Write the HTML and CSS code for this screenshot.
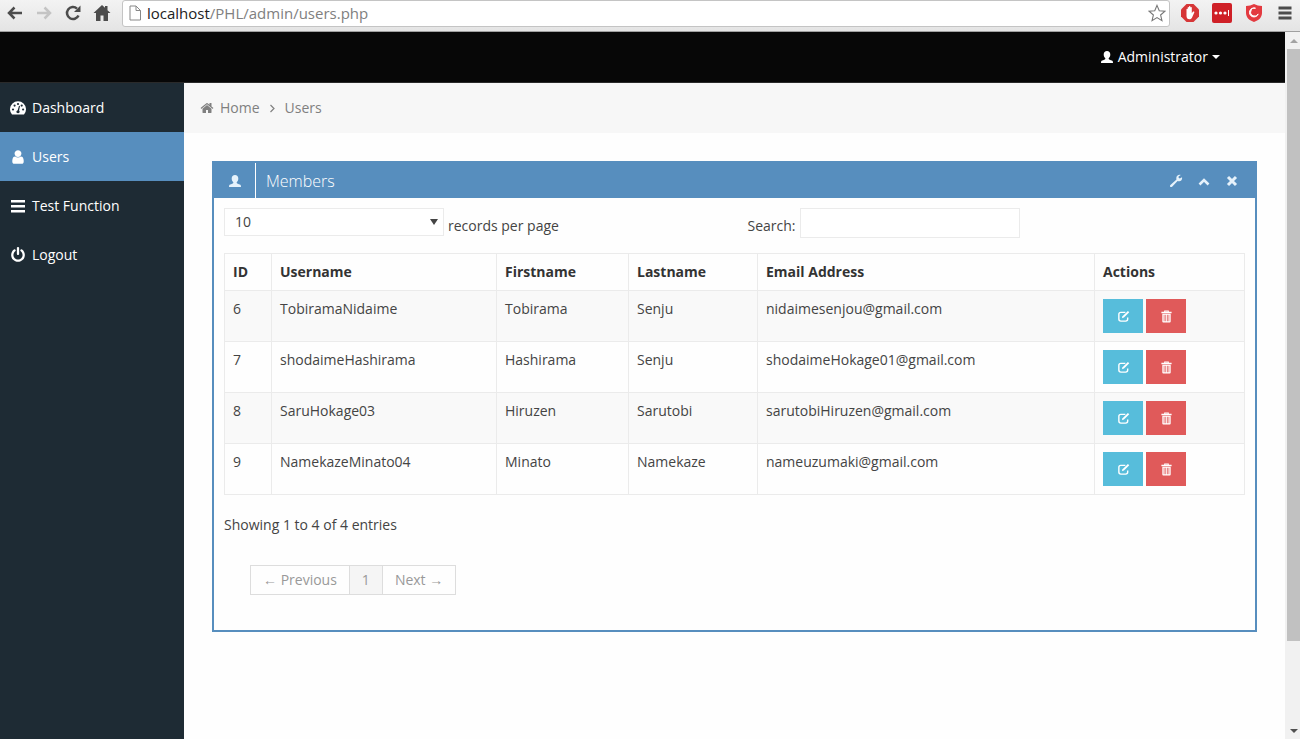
FILE: index.html
```html
<!DOCTYPE html>
<html lang="en">
<head>
  <meta charset="UTF-8">
  <title>Users</title>
  <link rel="stylesheet" href="styles.css">
</head>
<body>
  <!-- Shared icons -->
  <svg class="icon-defs" aria-hidden="true">
    <symbol id="icon-person" viewBox="0 0 14 14">
      <path d="M7 1c2 0 3.300 1.300 3.300 3.500 0 1.600-.7 3-1.600 3.800v.8c.4.7 1.800 1 3.100 1.500.9.400 1.200 1 1.200 2.400H1c0-1.400.3-2 1.200-2.400 1.300-.5 2.700-.8 3.100-1.500v-.8C4.400 7.500 3.700 6.100 3.700 4.500 3.700 2.300 5 1 7 1z"/>
    </symbol>
    <symbol id="icon-edit" viewBox="0 0 14 14">
      <path d="M9 2.500H4.200C2.800 2.500 2 3.300 2 4.700v5.100C2 11.200 2.800 12 4.200 12h5.100c1.400 0 2.200-.8 2.200-2.200V8" fill="none" stroke="currentColor" stroke-width="1.500"/>
      <path d="M11.700 1l1.500 1.500-5.700 5.700-2.300.8.800-2.300z"/>
    </symbol>
    <symbol id="icon-trash" viewBox="0 0 14 14">
      <path d="M4.500 2V.5h5V2h3v1.500h-11V2zm1 0h3v-.5h-3z" fill-rule="evenodd"/>
      <path d="M2.500 4h9v8.500c0 .7-.4 1-1 1h-7c-.6 0-1-.3-1-1zM4 5v7h.8V5zm1.800 0v7h.8V5zm1.700 0v7h.8V5zm1.700 0v7h.8V5z" fill-rule="evenodd"/>
    </symbol>
  </svg>

  <div class="toolbar">
    <button class="tool-btn" aria-label="Back">
      <svg viewBox="0 0 18 18"><path d="M16 9H3M8.500 3.500L3 9l5.500 5.500" fill="none" stroke="currentColor" stroke-width="2.500"/></svg>
    </button>
    <button class="tool-btn" aria-label="Forward" disabled>
      <svg viewBox="0 0 18 18"><path d="M2 9h13M9.500 3.500L15 9l-5.500 5.500" fill="none" stroke="currentColor" stroke-width="2.500"/></svg>
    </button>
    <button class="tool-btn" aria-label="Reload">
      <svg viewBox="0 0 18 18"><path d="M14.500 11.500A6 6 0 1 1 13 4.600" fill="none" stroke="currentColor" stroke-width="2.500"/><path d="M16.500 1.500v6.500H10z"/></svg>
    </button>
    <button class="tool-btn" aria-label="Home page">
      <svg viewBox="0 0 18 18"><path d="M9 1l3 2.800V2h2.500v4.200L17.500 9H15v8h-4.500v-5.500h-3V17H3V9H.5z"/></svg>
    </button>
    <div class="address">
      <svg class="page-icon" viewBox="0 0 14 16"><path d="M2 1h6l4.500 4.500V15H2zM8 1v4.500h4.500" fill="none" stroke="currentColor"/></svg>
      <div class="url" role="textbox" contenteditable="true" spellcheck="false" aria-label="Address">localhost<span class="path">/PHL/admin/users.php</span></div>
      <button class="star" aria-label="Bookmark this page">
        <svg viewBox="0 0 20 20"><path d="M10 1.500l2.500 6 6.300.5-4.800 4.200 1.500 6.300-5.500-3.400-5.500 3.400L6 12.200 1.200 8l6.300-.5z" fill="#fff" stroke="currentColor" stroke-width="1.200"/></svg>
      </button>
    </div>
    <div class="extensions">
      <button class="tool-btn" aria-label="Ad blocker">
        <svg viewBox="0 0 18 18"><path d="M5.500 0h7L18 5.500v7L12.500 18h-7L0 12.500v-7z" fill="#d63637"/><path d="M5.500 10V5.300c0-.8 1.200-.8 1.200 0V3.500c0-.8 1.300-.8 1.300 0v-.8c0-.9 1.400-.9 1.400 0v.8c0-.8 1.400-.8 1.400 0v5.700l1-1.400c.6-.8 1.900-.3 1.500.6l-2.100 4.900c-.7 1.500-1.500 2-2.700 2-2 0-3-1.300-3-3.300z" fill="#fff"/></svg>
      </button>
      <button class="tool-btn large" aria-label="Password manager">
        <svg viewBox="0 0 20 20"><rect width="20" height="20" rx="2" fill="#cf2027"/><g fill="#fff"><circle cx="4" cy="10" r="1.600"/><circle cx="8.500" cy="10" r="1.600"/><circle cx="13" cy="10" r="1.600"/><path d="M16 7h1v6h-1z"/></g></svg>
      </button>
      <button class="tool-btn" aria-label="Security">
        <svg viewBox="0 0 18 18"><path d="M1 2c3 0 5.500-.7 8-2 2.500 1.300 5 2 8 2v7c0 4.500-3.500 7.500-8 9-4.500-1.500-8-4.500-8-9z" fill="#e33a40"/><path d="M10.500 4.200A4.500 4.500 0 1 0 13.200 10 4 4 0 1 1 10.500 4.200z" fill="#fff" stroke="#fff"/></svg>
      </button>
      <button class="tool-btn" aria-label="Menu">
        <svg viewBox="0 0 18 18"><path d="M2.500 2.500h13v3h-13zm0 5h13v3h-13zm0 5h13v3h-13z"/></svg>
      </button>
    </div>
  </div>

  <div class="viewport">
    <div class="site">
      <header class="topbar">
        <button class="user-menu">
          <svg class="icon" viewBox="0 0 14 14"><use href="#icon-person"/></svg>
          Administrator
          <span class="caret"></span>
        </button>
      </header>

      <div class="layout">
        <nav class="sidebar">
          <a href="#dashboard">
            <svg class="menu-icon" viewBox="0 0 16 16"><path d="M2 14.500A8 8 0 1 1 14 14.500z"/><g fill="#1e2b34"><circle cx="3" cy="9.500" r="1.100"/><circle cx="4.600" cy="5.600" r="1.100"/><circle cx="8" cy="4" r="1.100"/><circle cx="11.700" cy="5.600" r="1.100"/><circle cx="13.100" cy="9.500" r="1.100"/><path d="M9 5.800l1 .2-.9 4.500c1.200 1.200.5 2.700-1.100 2.700-1.800 0-2.300-2-.3-2.900z"/></g></svg>
            Dashboard
          </a>
          <a href="#users" class="active">
            <svg class="menu-icon" viewBox="0 0 1792 1792"><path d="M1536 1399q0 109-62.500 187t-150.500 78h-854q-88 0-150.500-78t-62.500-187q0-85 8.500-160.500t31.500-152 58.500-131 94-89 134.500-34.500q131 128 313 128t313-128q76 0 134.500 34.500t94 89 58.500 131 31.500 152 8.500 160.500zm-256-887q0 159-112.500 271.500t-271.500 112.500-271.500-112.500-112.500-271.500 112.500-271.500 271.500-112.500 271.500 112.500 112.500 271.500z"/></svg>
            Users
          </a>
          <a href="#test">
            <svg class="menu-icon" viewBox="0 0 16 16"><path d="M1 2h14v2.500H1zm0 5h14v2.500H1zm0 5h14v2.500H1z"/></svg>
            Test Function
          </a>
          <a href="#logout">
            <svg class="menu-icon" viewBox="0 0 1792 1792"><path d="M1664 896q0 156-61 298t-164 245-245 164-298 61-298-61-245-164-164-245-61-298q0-182 80.500-343t226.500-270q43-32 95.500-25t83.500 50q32 42 24.500 94.500t-49.500 84.500q-98 74-151.500 181t-53.500 228q0 104 40.500 198.500t109.500 163.500 163.500 109.500 198.500 40.500 198.500-40.500 163.500-109.500 109.500-163.500 40.500-198.500q0-121-53.500-228t-151.500-181q-42-32-49.500-84.500t24.500-94.500q31-43 84-50t95 25q146 109 226.500 270t80.500 343zm-640-768v640q0 52-38 90t-90 38-90-38-38-90v-640q0-52 38-90t90-38 90 38 38 90z"/></svg>
            Logout
          </a>
        </nav>

        <main class="content">
          <div class="breadcrumb">
            <svg class="icon" viewBox="0 0 1792 1792"><path d="M1472 992v480q0 26-19 45t-45 19h-384v-384h-256v384h-384q-26 0-45-19t-19-45v-480q0-1 .5-3t.5-3l575-474 575 474q1 2 1 6zm223-69l-62 74q-8 9-21 11h-3q-13 0-21-7l-692-577-692 577q-12 8-24 7-13-2-21-11l-62-74q-8-10-7-23.500t11-21.500l719-599q32-26 76-26t76 26l244 204v-195q0-14 9-23t23-9h192q14 0 23 9t9 23v408l219 182q10 8 11 21.500t-7 23.500z"/></svg>
            <a href="#home">Home</a>
            <svg class="separator" viewBox="0 0 8 14"><path d="M2 4l3.500 3.500L2 11" fill="none" stroke="currentColor" stroke-width="1.200"/></svg>
            <a href="#users">Users</a>
          </div>

          <section class="box">
            <div class="box-header">
              <span class="box-icon"><svg class="icon" viewBox="0 0 14 14"><use href="#icon-person"/></svg></span>
              <h2>Members</h2>
              <div class="box-tools">
                <button aria-label="Settings"><svg class="icon" viewBox="0 0 14 14"><path d="M13 3.200l-2.200 1.200-1.200-.7V2.400L11.700.9C9.500.2 7.200 1.800 7.300 4.300c0 .5.100.8.2 1.200L1.400 11c-1.200 1.300.4 2.900 1.700 1.700l5.500-5.600c2.700.9 5.100-1.300 4.400-3.900z"/></svg></button>
                <button aria-label="Collapse"><svg class="icon" viewBox="0 0 14 14"><path d="M2.500 10.500L7 6l4.500 4.500" fill="none" stroke="currentColor" stroke-width="2.600"/></svg></button>
                <button aria-label="Close"><svg class="icon" viewBox="0 0 14 14"><path d="M3 3l8 8M11 3l-8 8" fill="none" stroke="currentColor" stroke-width="3"/></svg></button>
              </div>
            </div>

            <div class="box-content">
              <div class="filters">
                <div class="length">
                  <span class="select-wrap">
                    <select id="pageLength">
                      <option>10</option>
                      <option>25</option>
                      <option>50</option>
                      <option>100</option>
                    </select>
                  </span>
                  <label for="pageLength">records per page</label>
                </div>
                <div class="search">
                  <label for="userSearch">Search:</label>
                  <input type="text" id="userSearch">
                </div>
              </div>

              <table>
                <colgroup>
                  <col class="col-id">
                  <col class="col-username">
                  <col class="col-firstname">
                  <col class="col-lastname">
                  <col class="col-email">
                  <col class="col-actions">
                </colgroup>
                <thead>
                  <tr>
                    <th>ID</th>
                    <th>Username</th>
                    <th>Firstname</th>
                    <th>Lastname</th>
                    <th>Email Address</th>
                    <th>Actions</th>
                  </tr>
                </thead>
                <tbody>
                  <tr>
                    <td>6</td>
                    <td>TobiramaNidaime</td>
                    <td>Tobirama</td>
                    <td>Senju</td>
                    <td>nidaimesenjou@gmail.com</td>
                    <td>
                      <div class="actions">
                        <button class="btn btn-info" aria-label="Edit"><svg class="icon" viewBox="0 0 14 14"><use href="#icon-edit"/></svg></button>
                        <button class="btn btn-danger" aria-label="Delete"><svg class="icon" viewBox="0 0 14 14"><use href="#icon-trash"/></svg></button>
                      </div>
                    </td>
                  </tr>
                  <tr>
                    <td>7</td>
                    <td>shodaimeHashirama</td>
                    <td>Hashirama</td>
                    <td>Senju</td>
                    <td>shodaimeHokage01@gmail.com</td>
                    <td>
                      <div class="actions">
                        <button class="btn btn-info" aria-label="Edit"><svg class="icon" viewBox="0 0 14 14"><use href="#icon-edit"/></svg></button>
                        <button class="btn btn-danger" aria-label="Delete"><svg class="icon" viewBox="0 0 14 14"><use href="#icon-trash"/></svg></button>
                      </div>
                    </td>
                  </tr>
                  <tr>
                    <td>8</td>
                    <td>SaruHokage03</td>
                    <td>Hiruzen</td>
                    <td>Sarutobi</td>
                    <td>sarutobiHiruzen@gmail.com</td>
                    <td>
                      <div class="actions">
                        <button class="btn btn-info" aria-label="Edit"><svg class="icon" viewBox="0 0 14 14"><use href="#icon-edit"/></svg></button>
                        <button class="btn btn-danger" aria-label="Delete"><svg class="icon" viewBox="0 0 14 14"><use href="#icon-trash"/></svg></button>
                      </div>
                    </td>
                  </tr>
                  <tr>
                    <td>9</td>
                    <td>NamekazeMinato04</td>
                    <td>Minato</td>
                    <td>Namekaze</td>
                    <td>nameuzumaki@gmail.com</td>
                    <td>
                      <div class="actions">
                        <button class="btn btn-info" aria-label="Edit"><svg class="icon" viewBox="0 0 14 14"><use href="#icon-edit"/></svg></button>
                        <button class="btn btn-danger" aria-label="Delete"><svg class="icon" viewBox="0 0 14 14"><use href="#icon-trash"/></svg></button>
                      </div>
                    </td>
                  </tr>
                </tbody>
              </table>

              <p class="info">Showing 1 to 4 of 4 entries</p>
              <div class="pagination">
                <a href="#prev"><span class="arrow-text">←</span> Previous</a>
                <a href="#page1" class="active">1</a>
                <a href="#next">Next <span class="arrow-text">→</span></a>
              </div>
            </div>
          </section>
        </main>
      </div>
    </div>

    <div class="scrollbar" aria-hidden="true">
      <span class="arrow up"></span>
      <div class="track"><div class="thumb"></div></div>
      <span class="arrow down"></span>
    </div>
  </div>
</body>
</html>
```

FILE: styles.css
```css
* {
  box-sizing: border-box;
}
body {
  margin: 0;
  height: 100vh;
  display: flex;
  flex-direction: column;
  font-family: "Open Sans", "Liberation Sans", sans-serif;
  font-size: 14px;
  line-height: 20px;
  color: #444;
  background: #fefefe;
}
button, input, select {
  font: inherit;
  color: inherit;
}
button {
  display: flex;
  align-items: center;
  justify-content: center;
  padding: 0;
  border: 0;
  background: none;
}
a {
  color: inherit;
  text-decoration: none;
}
svg {
  display: block;
  flex: none;
  fill: currentColor;
}
.icon {
  width: 14px;
  height: 14px;
}
.icon-defs {
  display: none;
}

/* browser bar */
.toolbar {
  display: flex;
  align-items: center;
  gap: 11px;
  height: 32px;
  padding: 0 6px 5px;
  background: linear-gradient(#f3f3f3, #e4e4e4);
  border-bottom: 1px solid #a0a0a0;
  color: #4c4c4c;
}
.tool-btn svg {
  width: 18px;
  height: 18px;
}
.tool-btn.large svg {
  width: 20px;
  height: 20px;
}
.tool-btn:disabled {
  color: #c4c4c4;
}
.address {
  flex: 1;
  display: flex;
  align-items: center;
  gap: 5px;
  height: 27px;
  padding: 0 3px 0 5px;
  background: #fff;
  border: 1px solid #c4c4c4;
  border-radius: 3px;
}
.page-icon {
  width: 14px;
  height: 16px;
  color: #888;
}
.url {
  flex: 1;
  font-size: 15px;
  color: #222;
}
.url .path {
  color: #808080;
}
.star {
  color: #777;
}
.star svg {
  width: 18px;
  height: 18px;
}
.extensions {
  display: flex;
  align-items: center;
  gap: 13px;
}

/* page and its scrollbar */
.viewport {
  flex: 1;
  display: flex;
  min-height: 0;
}
.site {
  flex: 1;
  display: flex;
  flex-direction: column;
}
.scrollbar {
  width: 15px;
  display: flex;
  flex-direction: column;
  padding-left: 2px;
  background: #f1f1f1;
}
.track {
  flex: 1;
}
.thumb {
  height: 88%;
  background: #c1c1c1;
}
.arrow {
  height: 17px;
  display: flex;
  align-items: center;
  justify-content: center;
}
.arrow::after {
  content: "";
  border: 4px solid transparent;
}
.arrow.up::after {
  border-top: 0;
  border-bottom-color: #a3a3a3;
}
.arrow.down::after {
  border-bottom: 0;
  border-top-color: #505050;
}

.topbar {
  display: flex;
  justify-content: flex-end;
  height: 51px;
  padding: 0 65px;
  background: #070707;
  border-bottom: 1px solid #2a2a2a;
  color: #fff;
}
.user-menu {
  gap: 4px;
}
.caret {
  border: 4px solid transparent;
  border-top-color: #fff;
  border-bottom: 0;
}

.layout {
  flex: 1;
  display: flex;
}
.sidebar {
  width: 184px;
  background: #1e2b34;
  color: #fff;
}
.sidebar a {
  display: flex;
  align-items: center;
  gap: 6px;
  height: 49px;
  padding: 0 10px;
}
.sidebar a.active {
  background: #578ebe;
}
.menu-icon {
  width: 16px;
  height: 16px;
}

.content {
  flex: 1;
}
.breadcrumb {
  display: flex;
  align-items: center;
  gap: 6px;
  height: 50px;
  padding: 0 16px;
  background: #f7f7f7;
  color: #808080;
}
.separator {
  width: 13px;
  height: 14px;
}

.box {
  margin: 28px;
  border: 2px solid #578ebe;
}
.box-header {
  display: flex;
  align-items: center;
  height: 35px;
  background: #578ebe;
  color: #e6f2fb;
}
.box-icon {
  display: flex;
  align-items: center;
  justify-content: center;
  width: 42px;
  height: 100%;
  border-right: 1px solid #fff;
}
.box-header h2 {
  flex: 1;
  margin: 0;
  padding: 0 10px;
  font-size: 16px;
  font-weight: 300;
  color: #fff;
}
.box-tools {
  display: flex;
  gap: 14px;
  padding: 0 16px;
}
.box-content {
  padding: 10px 10px 35px;
}

.filters {
  display: grid;
  grid-template-columns: 1fr 1fr;
  gap: 26px;
  margin-bottom: 15px;
}
.length, .search {
  display: flex;
  gap: 4px;
}
.filters label {
  padding-top: 8px;
}
.filters select, .filters input {
  width: 220px;
  border: 1px solid #ebebeb;
  border-radius: 0;
  background: #fff;
}
.filters select {
  display: block;
  height: 28px;
  padding: 0 10px;
  appearance: none;
}
.filters input {
  height: 30px;
}
.select-wrap {
  position: relative;
}
.select-wrap::after {
  content: "";
  position: absolute;
  top: 11px;
  right: 6px;
  border: 4px solid transparent;
  border-top: 6px solid #444;
  border-bottom: 0;
  pointer-events: none;
}

table {
  width: 100%;
  table-layout: fixed;
  border-collapse: collapse;
}
.col-id {
  width: 47px;
}
.col-username {
  width: 225px;
}
.col-firstname {
  width: 132px;
}
.col-lastname {
  width: 129px;
}
.col-actions {
  width: 150px;
}
th, td {
  padding: 8px;
  border: 1px solid #ebebeb;
  text-align: left;
  vertical-align: top;
}
th {
  color: #333;
}
tbody tr:nth-child(odd) {
  background: #f9f9f9;
}
.actions {
  display: flex;
  gap: 3px;
}
.btn {
  width: 40px;
  height: 34px;
  color: #fff;
}
.btn .icon {
  width: 13px;
  height: 13px;
}
.btn-info {
  background: #57bddb;
}
.btn-danger {
  background: #e05a5a;
}

.info {
  margin: 20px 0 30px;
}
.pagination {
  display: flex;
  padding: 0 26px;
  color: #999;
}
.pagination a {
  padding: 4px 12px;
  border: 1px solid #ddd;
}
.pagination a + a {
  border-left: 0;
}
.pagination .active {
  background: #f5f5f5;
}
.arrow-text {
  font-family: "Liberation Sans", sans-serif;
}
```
